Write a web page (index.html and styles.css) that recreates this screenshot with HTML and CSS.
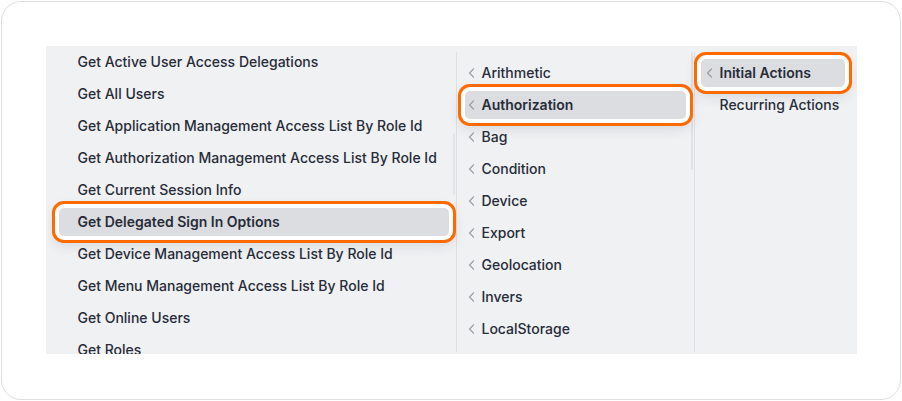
FILE: index.html
```html
<!DOCTYPE html>
<html>
<head>
<meta charset="utf-8">
<link rel="stylesheet" href="styles.css">
</head>
<body>
<div class="card">
  <div class="panel">
    <div class="col col1">
      <div class="thumb thumb1"></div>
      <ul class="list list1">
        <li class="item">Get Active User Access Delegations</li>
        <li class="item">Get All Users</li>
        <li class="item">Get Application Management Access List By Role Id</li>
        <li class="item">Get Authorization Management Access List By Role Id</li>
        <li class="item">Get Current Session Info</li>
        <li class="item sel">Get Delegated Sign In Options</li>
        <li class="item">Get Device Management Access List By Role Id</li>
        <li class="item">Get Menu Management Access List By Role Id</li>
        <li class="item">Get Online Users</li>
        <li class="item">Get Roles</li>
      </ul>
    </div>
    <div class="sep"></div>
    <div class="col col2">
      <div class="thumb thumb2"></div>
      <ul class="list list2">
        <li class="item"><svg class="chev" viewBox="0 0 8 10"><polyline points="5.5,1 1.5,5 5.5,9"/></svg>Arithmetic</li>
        <li class="item sel"><svg class="chev" viewBox="0 0 8 10"><polyline points="5.5,1 1.5,5 5.5,9"/></svg>Authorization</li>
        <li class="item"><svg class="chev" viewBox="0 0 8 10"><polyline points="5.5,1 1.5,5 5.5,9"/></svg>Bag</li>
        <li class="item"><svg class="chev" viewBox="0 0 8 10"><polyline points="5.5,1 1.5,5 5.5,9"/></svg>Condition</li>
        <li class="item"><svg class="chev" viewBox="0 0 8 10"><polyline points="5.5,1 1.5,5 5.5,9"/></svg>Device</li>
        <li class="item"><svg class="chev" viewBox="0 0 8 10"><polyline points="5.5,1 1.5,5 5.5,9"/></svg>Export</li>
        <li class="item"><svg class="chev" viewBox="0 0 8 10"><polyline points="5.5,1 1.5,5 5.5,9"/></svg>Geolocation</li>
        <li class="item"><svg class="chev" viewBox="0 0 8 10"><polyline points="5.5,1 1.5,5 5.5,9"/></svg>Invers</li>
        <li class="item"><svg class="chev" viewBox="0 0 8 10"><polyline points="5.5,1 1.5,5 5.5,9"/></svg>LocalStorage</li>
      </ul>
    </div>
    <div class="sep"></div>
    <div class="col col3">
      <ul class="list list3">
        <li class="item sel"><svg class="chev" viewBox="0 0 8 10"><polyline points="5.5,1 1.5,5 5.5,9"/></svg>Initial Actions</li>
        <li class="item leaf">Recurring Actions</li>
      </ul>
    </div>
  </div>
</div>
</body>
</html>
```
FILE: styles.css
```css
* { box-sizing: border-box; }
html, body { margin: 0; padding: 0; background: #ffffff; }
body {
  font-family: "Inter", "Liberation Sans", sans-serif;
  font-size: 14px;
  color: #272c38;
}
.card {
  margin: 1px;
  width: 900px;
  height: 399px;
  border: 1.5px solid #dcdee2;
  border-radius: 20px;
  padding: 43.5px;
}
.panel {
  display: flex;
  height: 308px;
  background: #f0f1f3;
  overflow: hidden;
}
.col { position: relative; }
.col1 { width: 410px; flex: none; }
.col2 { width: 237px; flex: none; }
.col3 { flex: 1; }
.sep {
  width: 1px;
  flex: none;
  background: #dfe0e4;
  margin: 6px 0 2px;
}
.thumb {
  position: absolute;
  width: 2px;
  border-radius: 1px;
  background: #e1e2e6;
  z-index: 0;
}
.thumb1 { right: 1px; top: 87px; height: 62px; }
.thumb2 { right: 1px; top: 6px; height: 118px; }
.list {
  list-style: none;
  margin: 0;
  display: flex;
  flex-direction: column;
  gap: 4px;
}
.list1 { padding: 2px 0 0; }
.list2, .list3 { padding: 13px 0 0; }
.item {
  position: relative;
  z-index: 1;
  height: 28px;
  line-height: 28px;
  font-weight: 500;
  white-space: nowrap;
  display: flex;
  align-items: center;
  border-radius: 5px;
}
.list1 .item { margin: 0 7px 0 13px; padding-left: 19px; }
.list2 .item { margin: 0 8px; padding-left: 3px; }
.list3 .item { margin: 0 12px 0 6px; padding-left: 5px; }
.list3 .item.leaf { padding-left: 19px; }
.chev {
  width: 8px;
  height: 10px;
  flex: none;
  margin-right: 6px;
  fill: none;
  stroke: #9c9ea6;
  stroke-width: 1.2;
  stroke-linecap: round;
  stroke-linejoin: round;
}
.item.sel {
  background: #dcdde1;
  font-weight: 600;
  box-shadow: 0 0 0 4px #ffffff, 0 0 0 7px #ff6a00, 0 5px 14px 4px rgba(40, 44, 56, 0.14);
}
```
